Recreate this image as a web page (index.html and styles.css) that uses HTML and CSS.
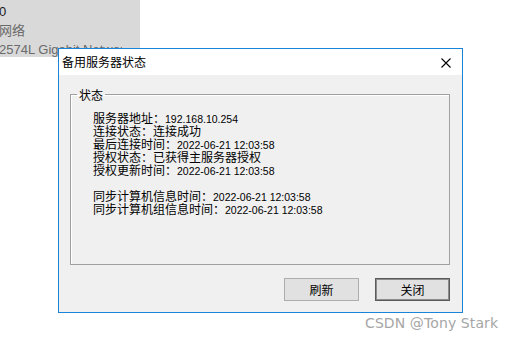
FILE: index.html
```html
<!DOCTYPE html>
<html>
<head>
<meta charset="utf-8">
<link rel="stylesheet" href="styles.css">
</head>
<body>
<div class="desktop">
  <div class="bgwin">
    <div class="bgline dark">0</div>
    <div class="bgline">网络</div>
    <div class="bgline clip">2574L Gigabit Network Connection</div>
  </div>

  <div class="dialog">
    <div class="titlebar">
      <span class="title">备用服务器状态</span>
      <svg class="close" width="10" height="10" viewBox="0 0 10 10">
        <path d="M0.5 0.5 L9.5 9.5 M9.5 0.5 L0.5 9.5" stroke="#000" stroke-width="1.1" fill="none"/>
      </svg>
    </div>
    <div class="body">
      <fieldset class="group">
        <legend class="legend">状态</legend>
        <div class="info">
          <div class="line">服务器地址：<span class="num">192.168.10.254</span></div>
          <div class="line">连接状态：连接成功</div>
          <div class="line">最后连接时间：<span class="num">2022-06-21 12:03:58</span></div>
          <div class="line">授权状态：已获得主服务器授权</div>
          <div class="line">授权更新时间：<span class="num">2022-06-21 12:03:58</span></div>
          <div class="line"></div>
          <div class="line">同步计算机信息时间：<span class="num">2022-06-21 12:03:58</span></div>
          <div class="line">同步计算机组信息时间：<span class="num">2022-06-21 12:03:58</span></div>
        </div>
      </fieldset>
      <div class="buttons">
        <button class="btn">刷新</button>
        <button class="btn default">关闭</button>
      </div>
    </div>
  </div>

  <div class="watermark">CSDN @Tony Stark</div>
</div>
</body>
</html>
```

FILE: styles.css
```css
html, body {
  margin: 0;
  padding: 0;
  background: #ffffff;
}

.desktop {
  position: relative;
  width: 515px;
  height: 342px;
  overflow: hidden;
  font-family: "Liberation Sans", "Noto Sans CJK SC", sans-serif;
}

.bgwin {
  position: absolute;
  left: 0;
  top: 0;
  width: 140px;
  height: 57px;
  background: #d9d9d9;
  padding-top: 2px;
  box-sizing: border-box;
}

.bgline {
  font-size: 13px;
  line-height: 19px;
  color: #6a6a6a;
  white-space: nowrap;
  margin-left: -1px;
}

.bgline.dark {
  color: #1a1a1a;
}

.bgline.clip {
  width: 123px;
  overflow: hidden;
}

.dialog {
  position: absolute;
  left: 58px;
  top: 48px;
  width: 403px;
  height: 263px;
  border: 1px solid #1a84d8;
  background: #f0f0f0;
  display: flex;
  flex-direction: column;
}

.titlebar {
  height: 26px;
  background: #ffffff;
  display: flex;
  align-items: center;
  justify-content: space-between;
  padding: 0 11px 0 3px;
  flex: none;
}

.title {
  font-family: "Noto Sans CJK SC", sans-serif;
  font-size: 12px;
  color: #000;
  line-height: 14px;
  margin-top: -1px;
}

.close {
  display: block;
  margin-top: 1px;
}

.body {
  flex: 1;
  display: flex;
  flex-direction: column;
  padding: 13px 12px 0 11px;
}

.group {
  margin: 0;
  padding: 10px 0 0 6px;
  border: 1px solid #a0a0a0;
  box-shadow: inset 1px 1px 0 #ffffff;
  min-width: 0;
}

.legend {
  padding: 0 2px;
  font-family: "Noto Sans CJK SC", sans-serif;
  font-size: 12px;
  line-height: 13px;
  color: #000;
}

.info {
  height: 153px;
  margin-left: 16px;
  font-family: "Noto Sans CJK SC", sans-serif;
  font-size: 12px;
  color: #000;
}

.line {
  height: 13px;
  line-height: 13px;
  white-space: nowrap;
}

.num {
  font-family: "Liberation Sans", sans-serif;
  font-size: 10.5px;
}

.buttons {
  display: flex;
  justify-content: flex-end;
  gap: 16px;
  margin-top: 13px;
}

.btn {
  width: 75px;
  height: 23px;
  margin: 0;
  padding: 0;
  background: #e1e1e1;
  border: 1px solid #adadad;
  font-family: "Noto Sans CJK SC", sans-serif;
  font-size: 12px;
  color: #000;
  line-height: 14px;
}

.btn.default {
  border: 1px solid #5a5a5a;
  box-shadow: inset 0 0 0 1px #8c8c8c;
}

.watermark {
  position: absolute;
  left: 365px;
  top: 315px;
  font-family: "DejaVu Sans", sans-serif;
  font-size: 14px;
  letter-spacing: 0.1px;
  line-height: 16px;
  color: #a6a6a6;
  white-space: nowrap;
}
```
